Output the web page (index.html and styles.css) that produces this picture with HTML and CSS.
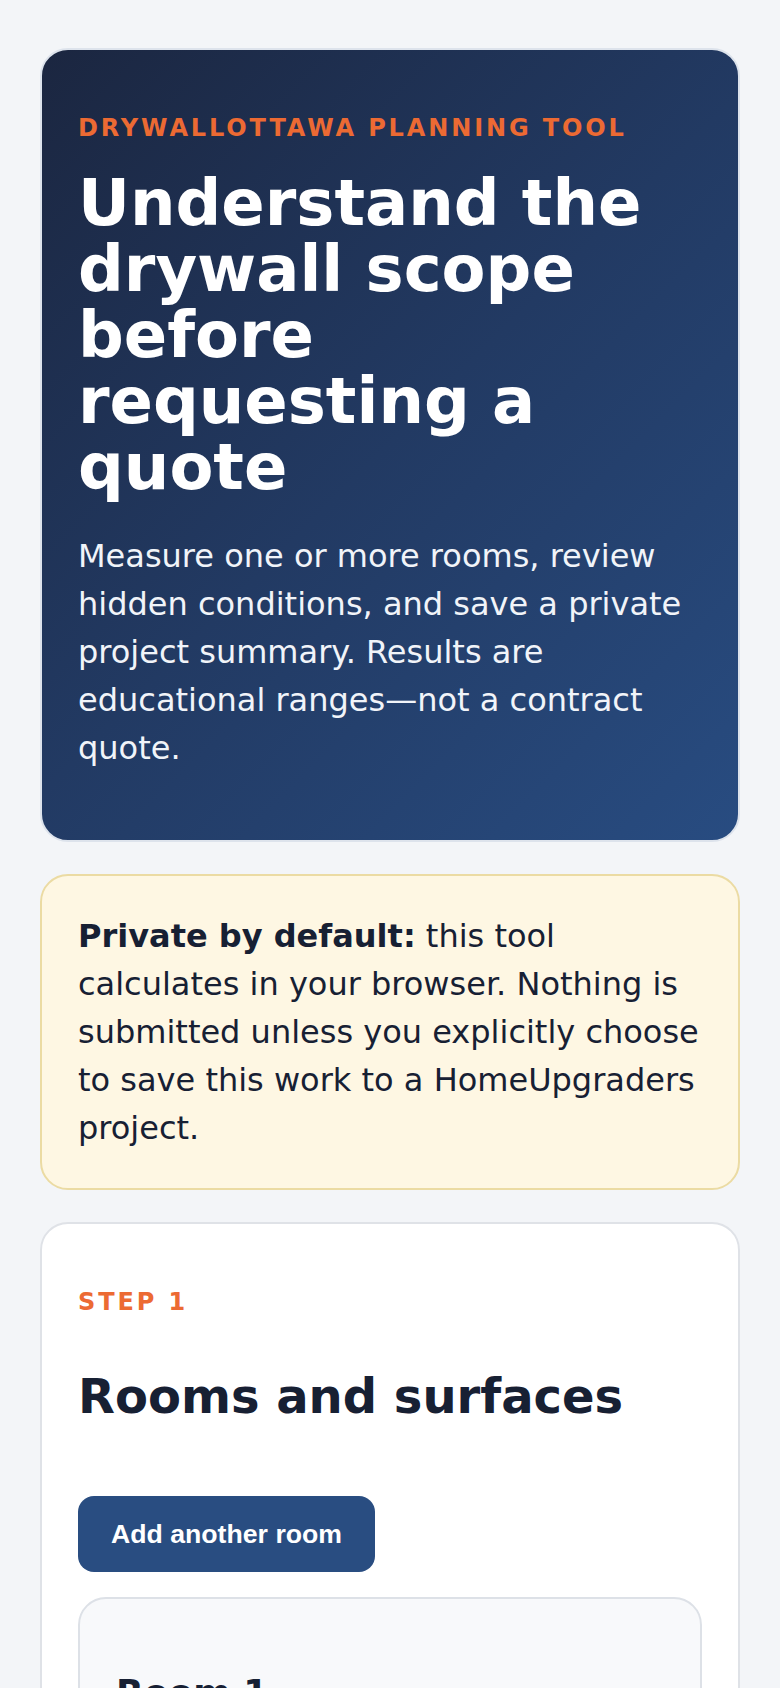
FILE: index.html
```html
<!DOCTYPE html>
<html lang="en">
<head>
<meta charset="utf-8">
<title>DrywallOttawa planning tool</title>
<link rel="stylesheet" href="styles.css">
</head>
<body>
<main class="page">
  <section class="card hero">
    <p class="eyebrow">DrywallOttawa planning tool</p>
    <h1 class="hero-title">Understand the drywall scope before requesting a quote</h1>
    <p class="hero-lead">Measure one or more rooms, review hidden conditions, and save a private project summary. Results are educational ranges—not a contract quote.</p>
  </section>

  <section class="card notice">
    <p class="notice-text"><strong>Private by default:</strong> this tool calculates in your browser. Nothing is submitted unless you explicitly choose to save this work to a HomeUpgraders project.</p>
  </section>

  <section class="card step">
    <p class="eyebrow">Step 1</p>
    <h2 class="step-title">Rooms and surfaces</h2>
    <button class="btn-primary" type="button">Add another room</button>
    <div class="room">
      <h3 class="room-title">Room 1</h3>
    </div>
  </section>
</main>
</body>
</html>
```

FILE: styles.css
```css
* {
  box-sizing: border-box;
}

html, body {
  margin: 0;
  padding: 0;
  background: #f3f5f8;
}

body {
  font-family: "DejaVu Sans", "Noto Sans", sans-serif;
  color: #172033;
}

.page {
  display: flex;
  flex-direction: column;
  gap: 32px;
  padding: 48px 40px 80px;
}

.card {
  border: 2px solid #dfe2e7;
  border-radius: 28px;
  padding: 36px;
}

.eyebrow {
  margin: 24px 0 0;
  font-size: 24px;
  line-height: 36px;
  font-weight: 700;
  letter-spacing: 0.12em;
  text-transform: uppercase;
  color: #ec6a33;
}

/* Hero */
.hero {
  background: linear-gradient(135deg, #1b2640 0%, #223a63 50%, #284c81 100%);
  border-color: #dde3ec;
  color: #ffffff;
}

.hero-title {
  margin: 24px 0 0;
  font-size: 64px;
  line-height: 66px;
  font-weight: 700;
  color: #ffffff;
}

.hero-lead {
  margin: 32px 0 32px;
  font-size: 32px;
  line-height: 48px;
  color: #f1f4f9;
}

/* Privacy notice */
.notice {
  background: #fef7e3;
  border-color: #ebdba3;
}

.notice-text {
  margin: 0;
  font-size: 32px;
  line-height: 48px;
  color: #172033;
}

.notice-text strong {
  font-weight: 700;
}

/* Step card */
.step {
  background: #ffffff;
  padding-bottom: 60px;
}

.step-title {
  margin: 48px 0 0;
  font-size: 48px;
  line-height: 57.6px;
  font-weight: 700;
  color: #172033;
}

.btn-primary {
  display: inline-block;
  margin-top: 70px;
  padding: 23px 33px;
  border: none;
  border-radius: 16px;
  background: #294d81;
  color: #ffffff;
  font-family: "Liberation Sans", Arial, sans-serif;
  font-size: 26.67px;
  line-height: 30px;
  font-weight: 700;
  cursor: pointer;
}

.room {
  margin-top: 25px;
  min-height: 600px;
  padding: 36px;
  border: 2px solid #dde1e7;
  border-radius: 28px;
  background: #f8f9fb;
}

.room-title {
  margin: 36px 0 0;
  font-size: 36px;
  line-height: 43.2px;
  font-weight: 700;
  color: #172033;
}
```
